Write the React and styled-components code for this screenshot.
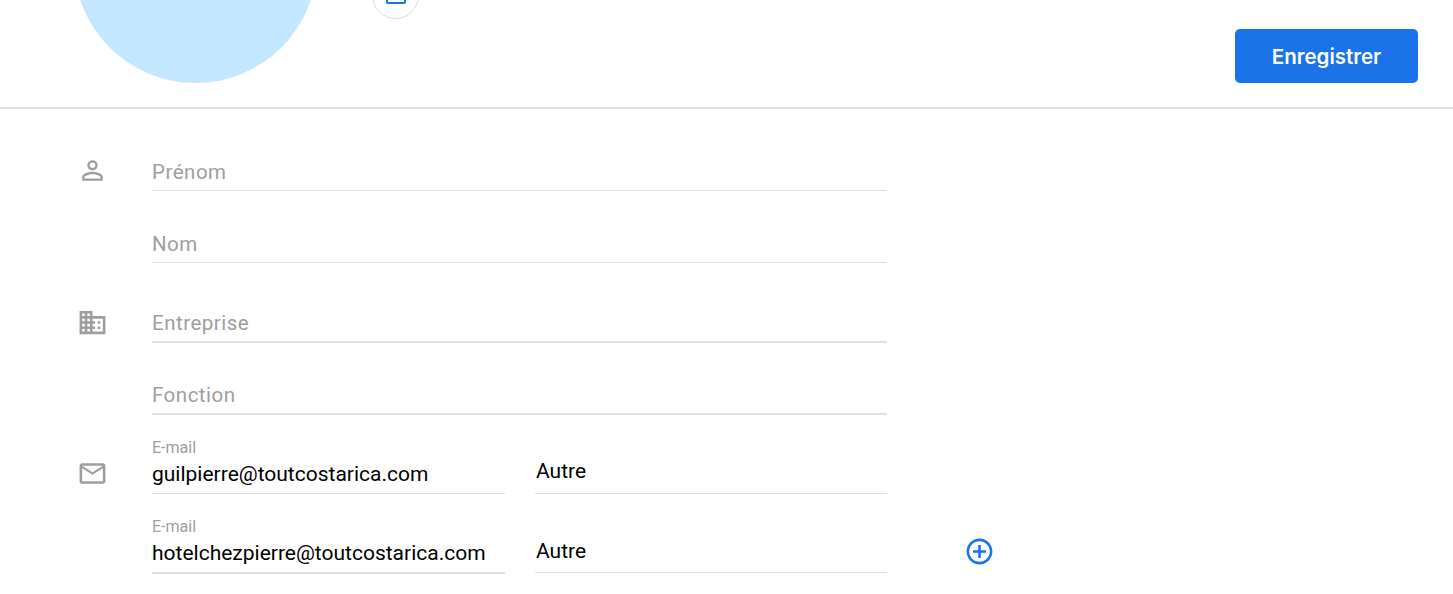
import styled, { createGlobalStyle } from "styled-components";

const GlobalStyle = createGlobalStyle`
  html, body {
    margin: 0;
    height: 100%;
    overflow: hidden;
    background: #fff;
    font-family: Roboto, "Liberation Sans", sans-serif;
  }
`;

const Header = styled.header`
  display: flex;
  align-items: flex-end;
  height: 107px;
  padding: 0 35px 0 74px;
  border-bottom: 2px solid #e0e0e0;
`;

const Avatar = styled.div`
  flex: none;
  width: 243px;
  height: 243px;
  margin-bottom: 24px;
  border-radius: 50%;
  background: #c2e7ff;
`;

const PhotoButton = styled.button`
  flex: none;
  display: flex;
  align-items: center;
  justify-content: center;
  width: 47px;
  height: 47px;
  margin: 0 0 88px 55px;
  padding: 0;
  border: 1px solid #dadce0;
  border-radius: 50%;
  background: #fff;
  color: #1a73e8;
`;

const SaveButton = styled.button`
  flex: none;
  width: 183px;
  height: 54px;
  margin: 0 0 24px auto;
  border: 0;
  border-radius: 5px;
  background: #1a73e8;
  color: #fff;
  font-family: Inter, Roboto, sans-serif;
  font-size: 20.5px;
  font-weight: 600;
`;

const Form = styled.main`
  padding: 10px 0 0 76.5px;
`;

const Row = styled.div`
  display: flex;
  align-items: flex-end;
  margin-top: ${(p) => p.$gap || 0}px;
`;

const IconCell = styled.div`
  flex: none;
  display: flex;
  width: 75.5px;
  margin-bottom: 5px;
  color: #9e9e9e;
`;

const Fields = styled.div`
  flex: none;
  display: grid;
  grid-template-columns: ${(p) => (p.$split ? "353px 352px" : "735px")};
  column-gap: 30px;
  align-items: end;
`;

const Field = styled.div`
  display: flex;
  flex-direction: column;
  justify-content: flex-end;
  height: ${(p) => p.$height || 72}px;
  margin-bottom: ${(p) => p.$lift || 0}px;
  border-bottom: ${(p) => p.$line || 1}px solid #e0e0e0;
  box-sizing: border-box;
`;

const Placeholder = styled.div`
  margin-bottom: 5px;
  color: #9e9e9e;
  font-size: 20.5px;
  line-height: 26px;
  letter-spacing: 0.5px;
`;

const FloatLabel = styled.div`
  color: #9aa0a6;
  font-size: 16px;
  line-height: 18px;
`;

const Value = styled.div`
  margin-top: 4px;
  margin-bottom: 6px;
  color: #000;
  font-size: 21px;
  line-height: 26px;
`;

const TypeValue = styled.div`
  margin-bottom: ${(p) => p.$bottom || 9}px;
  padding-left: 1px;
  color: #000;
  font-size: 21px;
  line-height: 26px;
`;

const AddButton = styled.button`
  flex: none;
  display: flex;
  margin: 0 0 7px 76.5px;
  padding: 0;
  border: 0;
  background: none;
  color: #1a73e8;
`;

const Icon = ({ d, size = 31 }) => (
  <svg width={size} height={size} viewBox="0 0 24 24" fill="currentColor">
    <path d={d} />
  </svg>
);

const ICONS = {
  camera:
    "M20 4h-3.17L15 2H9L7.17 4H4c-1.1 0-2 .9-2 2v12c0 1.1.9 2 2 2h16c1.1 0 2-.9 2-2V6c0-1.1-.9-2-2-2zm0 14H4V6h4.05l1.83-2h4.24l1.83 2H20v12zM12 9a3 3 0 1 0 0 6 3 3 0 0 0 0-6z",
  person:
    "M12 5.9a2.1 2.1 0 1 1 0 4.2 2.1 2.1 0 0 1 0-4.2m0 9c2.97 0 6.1 1.46 6.1 2.1v1.1H5.9V17c0-.64 3.13-2.1 6.1-2.1M12 4C9.79 4 8 5.79 8 8s1.79 4 4 4 4-1.79 4-4-1.79-4-4-4zm0 9c-2.67 0-8 1.34-8 4v3h16v-3c0-2.66-5.33-4-8-4z",
  domain:
    "M12 7V3H2v18h20V7H12zM6 19H4v-2h2v2zm0-4H4v-2h2v2zm0-4H4V9h2v2zm0-4H4V5h2v2zm4 12H8v-2h2v2zm0-4H8v-2h2v2zm0-4H8V9h2v2zm0-4H8V5h2v2zm10 12h-8v-2h2v-2h-2v-2h2v-2h-2V9h8v10zm-2-8h-2v2h2v-2zm0 4h-2v2h2v-2z",
  mail:
    "M20 4H4c-1.1 0-1.99.9-1.99 2L2 18c0 1.1.9 2 2 2h16c1.1 0 2-.9 2-2V6c0-1.1-.9-2-2-2zm0 14H4V8l8 5 8-5v10zm-8-7L4 6h16l-8 5z",
  add:
    "M13 7h-2v4H7v2h4v4h2v-4h4v-2h-4V7zm-1-5C6.48 2 2 6.48 2 12s4.48 10 10 10 10-4.48 10-10S17.52 2 12 2zm0 18c-4.41 0-8-3.59-8-8s3.59-8 8-8 8 3.59 8 8-3.59 8-8 8z",
};

export default function App() {
  return (
    <>
      <GlobalStyle />
      <Header>
        <Avatar />
        <PhotoButton>
          <Icon d={ICONS.camera} size={24} />
        </PhotoButton>
        <SaveButton>Enregistrer</SaveButton>
      </Header>
      <Form>
        <Row>
          <IconCell>
            <Icon d={ICONS.person} />
          </IconCell>
          <Fields>
            <Field>
              <Placeholder>Prénom</Placeholder>
            </Field>
          </Fields>
        </Row>
        <Row>
          <IconCell />
          <Fields>
            <Field>
              <Placeholder>Nom</Placeholder>
            </Field>
          </Fields>
        </Row>
        <Row $gap={8}>
          <IconCell>
            <Icon d={ICONS.domain} />
          </IconCell>
          <Fields>
            <Field $line={2}>
              <Placeholder>Entreprise</Placeholder>
            </Field>
          </Fields>
        </Row>
        <Row>
          <IconCell />
          <Fields>
            <Field $line={2}>
              <Placeholder>Fonction</Placeholder>
            </Field>
          </Fields>
        </Row>
        <Row $gap={7}>
          <IconCell>
            <Icon d={ICONS.mail} />
          </IconCell>
          <Fields $split>
            <Field>
              <FloatLabel>E-mail</FloatLabel>
              <Value>guilpierre@toutcostarica.com</Value>
            </Field>
            <Field>
              <TypeValue>Autre</TypeValue>
            </Field>
          </Fields>
        </Row>
        <Row $gap={7}>
          <IconCell />
          <Fields $split>
            <Field $line={2}>
              <FloatLabel>E-mail</FloatLabel>
              <Value>hotelchezpierre@toutcostarica.com</Value>
            </Field>
            <Field $lift={1}>
              <TypeValue $bottom={8}>Autre</TypeValue>
            </Field>
          </Fields>
          <AddButton>
            <Icon d={ICONS.add} />
          </AddButton>
        </Row>
      </Form>
    </>
  );
}
